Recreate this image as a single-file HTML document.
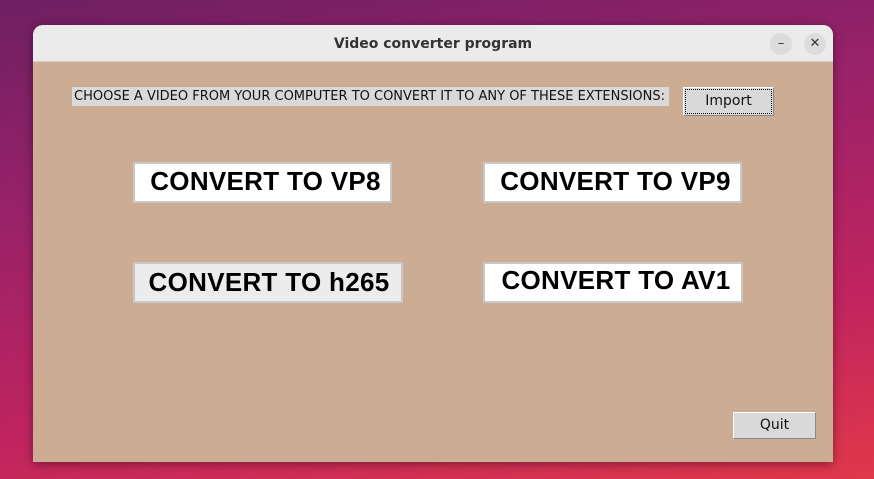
<!DOCTYPE html>
<html><head><style>
body{margin:0;width:874px;height:479px;overflow:hidden;position:relative;font-family:"Liberation Sans",sans-serif;
background:linear-gradient(170deg,#6e1f63 0%,#9a2269 35%,#c0245f 70%,#e0384a 100%);}
.win{position:absolute;left:33px;top:25px;width:800px;height:437px;background:#ccad94;border-radius:10px 10px 0 0;overflow:hidden;box-shadow:0 2px 10px rgba(0,0,0,.4)}
.tb{position:absolute;left:0;top:0;width:800px;height:36px;background:#ebebeb;border-bottom:1px solid #d0d0d0;text-align:center;line-height:38px;font-weight:bold;font-size:14px;color:#333;font-family:"DejaVu Sans","Liberation Sans",sans-serif}
.cb{position:absolute;top:8px;width:22px;height:22px;border-radius:50%;background:#dcdcdc;color:#333;text-align:center;line-height:22px;font-size:13px;font-weight:normal}
.lbl{position:absolute;left:39px;top:62px;width:595px;height:19px;background:#d9d9d9;font-size:13px;line-height:19px;color:#111;padding-left:2px;font-family:"DejaVu Sans",sans-serif;white-space:nowrap;letter-spacing:0}
.btn{position:absolute;box-sizing:border-box;border:2px solid #c8c8c8;background:#fff;font-weight:bold;font-size:26px;letter-spacing:0.3px;text-align:center;color:#000;padding-left:6px;white-space:nowrap}
.small{position:absolute;box-sizing:border-box;background:#d9d9d9;border:1px solid #fff;border-right-color:#888;border-bottom-color:#888;text-align:center;font-size:14px;color:#111;font-family:"DejaVu Sans",sans-serif}
</style></head><body>
<div class="win">
<div class="tb">Video converter program
<div class="cb" style="left:737px">–</div><div class="cb" style="left:771px">✕</div></div>
<div class="lbl">CHOOSE A VIDEO FROM YOUR COMPUTER TO CONVERT IT TO ANY OF THESE EXTENSIONS:</div>
<div class="small" style="left:650px;top:62px;width:91px;height:29px;line-height:27px;outline:1px dotted #000;outline-offset:-3px">Import</div>
<div class="btn" style="left:100px;top:137px;width:259px;height:41px;line-height:34px">CONVERT TO VP8</div>
<div class="btn" style="left:450px;top:137px;width:259px;height:41px;line-height:34px">CONVERT TO VP9</div>
<div class="btn" style="left:100px;top:237px;width:270px;height:41px;line-height:36px;background:#ececec;padding-left:2px">CONVERT TO h265</div>
<div class="btn" style="left:450px;top:237px;width:260px;height:41px;line-height:33px">CONVERT TO AV1</div>
<div class="small" style="left:700px;top:387px;width:83px;height:27px;line-height:25px">Quit</div>
</div>
</body></html>
